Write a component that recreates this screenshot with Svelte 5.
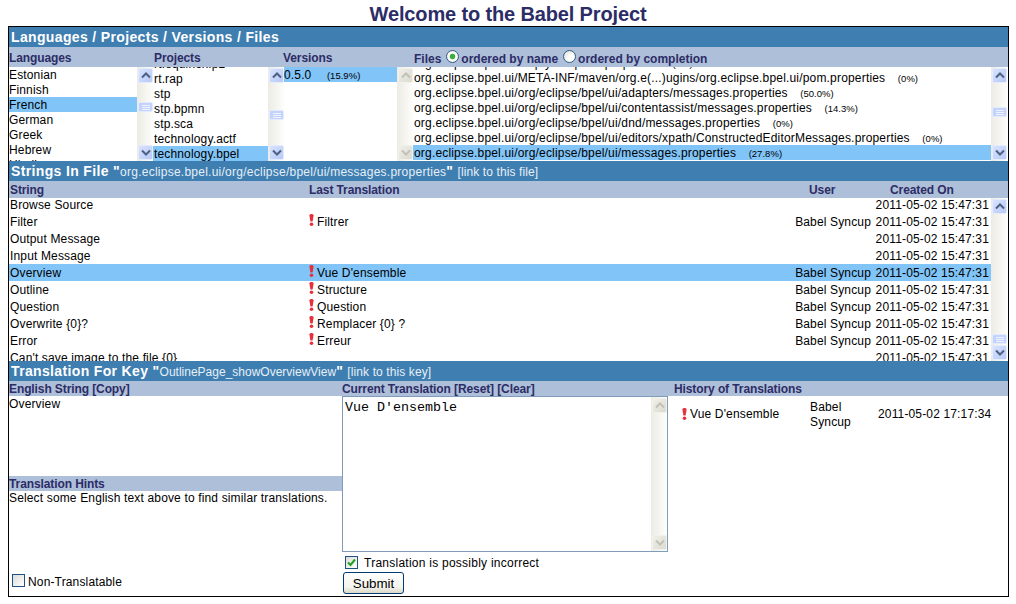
<script lang="ts">
  const languages = ['Estonian', 'Finnish', 'French', 'German', 'Greek', 'Hebrew', 'Hindi'];
  const projects = ['rt.equinox.p2', 'rt.rap', 'stp', 'stp.bpmn', 'stp.sca', 'technology.actf', 'technology.bpel'];

  const base = 'org.eclipse.bpel.ui/org/eclipse/bpel/ui/';
  const files = [
    { name: 'org.eclipse.bpel.ui/empty.template.properties', pct: '0 %' },
    { name: 'org.eclipse.bpel.ui/META-INF/maven/org.e(...)ugins/org.eclipse.bpel.ui/pom.properties', pct: '0 %' },
    { name: base + 'adapters/messages.properties', pct: '50.0 %' },
    { name: base + 'contentassist/messages.properties', pct: '14.3 %' },
    { name: base + 'dnd/messages.properties', pct: '0 %' },
    { name: base + 'editors/xpath/ConstructedEditorMessages.properties', pct: '0 %' },
    { name: base + 'messages.properties', pct: '27.8 %', selected: true }
  ];

  const stamp = '2011-05-02 15:47:31';
  const strings = [
    { key: 'Browse Source', text: '', user: '' },
    { key: 'Filter', text: 'Filtrer', user: 'Babel Syncup' },
    { key: 'Output Message', text: '', user: '' },
    { key: 'Input Message', text: '', user: '' },
    { key: 'Overview', text: "Vue D'ensemble", user: 'Babel Syncup', selected: true },
    { key: 'Outline', text: 'Structure', user: 'Babel Syncup' },
    { key: 'Question', text: 'Question', user: 'Babel Syncup' },
    { key: 'Overwrite {0}?', text: 'Remplacer {0} ?', user: 'Babel Syncup' },
    { key: 'Error', text: 'Erreur', user: 'Babel Syncup' },
    { key: "Can't save image to the file {0}", text: '', user: '' }
  ];
</script>

{#snippet arrow(up, disabled)}
  <div class="sb-btn" class:off={disabled}>
    <svg width="10" height="7" viewBox="0 0 10 7" aria-hidden="true">
      <polyline points={up ? '1,5.5 5,1.5 9,5.5' : '1,1.5 5,5.5 9,1.5'} />
    </svg>
  </div>
{/snippet}

{#snippet scrollbar(thumb, disabled = false)}
  <div class="sb">
    {@render arrow(true, disabled)}
    <div class="sb-track">
      {#if !disabled}
        <div class="sb-thumb" style="margin-top: {thumb}px"><i></i><i></i><i></i></div>
      {/if}
    </div>
    {@render arrow(false, disabled)}
  </div>
{/snippet}

{#snippet bang()}
  <svg class="bang" width="5" height="12" viewBox="0 0 5 12" aria-hidden="true">
    <path d="M0.4 1.6C0.4 0.6 1.3 0 2.5 0S4.6 0.6 4.6 1.6L3.6 7.6H1.4Z" />
    <circle cx="2.5" cy="10.2" r="1.8" />
  </svg>
{/snippet}

<h1>Welcome to the Babel Project</h1>

<div class="panel">
  <div class="bar">Languages / Projects / Versions / Files</div>
  <div class="sub pickers-head">
    <span>Languages</span>
    <span>Projects</span>
    <span>Versions</span>
    <span class="files-head">
      Files
      <span class="radio on"></span>ordered by name
      <span class="radio"></span>ordered by completion
    </span>
  </div>

  <div class="pickers">
    <div class="picker">
      <ul class="list">
        {#each languages as name}
          <li class:selected={name === 'French'}>{name}</li>
        {/each}
      </ul>
      {@render scrollbar(19)}
    </div>
    <div class="picker">
      <ul class="list scrolled-p">
        {#each projects as name}
          <li class:selected={name === 'technology.bpel'}>{name}</li>
        {/each}
      </ul>
      {@render scrollbar(27)}
    </div>
    <div class="picker">
      <ul class="list">
        <li class="selected">0.5.0 <small class="ver-pct">(15.9 %)</small></li>
      </ul>
      {@render scrollbar(0, true)}
    </div>
    <div class="picker">
      <ul class="list scrolled-f">
        {#each files as file}
          <li class:selected={file.selected}>{file.name} <small>({file.pct})</small></li>
        {/each}
      </ul>
      {@render scrollbar(24)}
    </div>
  </div>

  <div class="bar">Strings In File "<span class="thin">{base}messages.properties</span>" <span class="thin link">[link to this file]</span></div>
  <div class="sub strings-head">
    <span>String</span>
    <span>Last Translation</span>
    <span class="head-user">User</span>
    <span class="head-date">Created On</span>
  </div>

  <div class="strings">
    <div class="rows">
      {#each strings as row}
        <div class="row" class:selected={row.selected}>
          <span>{row.key}</span>
          <span class="cell-text">{#if row.text}{@render bang()}{row.text}{/if}</span>
          <span class="cell-right">{row.user}</span>
          <span class="cell-right">{stamp}</span>
        </div>
      {/each}
    </div>
    {@render scrollbar(120)}
  </div>

  <div class="bar">Translation For Key "<span class="thin key-name">OutlinePage_showOverviewView</span>" <span class="thin link">[link to this key]</span></div>

  <div class="editor">
    <section class="col">
      <div class="sub short">English String [Copy]</div>
      <div class="english">Overview</div>
      <div class="sub short">Translation Hints</div>
      <div class="hints">Select some English text above to find similar translations.</div>
      <label class="non-trans"><span class="check"></span><span class="non-trans-text">Non-Translatable</span></label>
    </section>

    <section class="col">
      <div class="sub short">Current Translation [Reset] [Clear]</div>
      <div class="area">
        <textarea readonly value="Vue D'ensemble"></textarea>
        {@render scrollbar(0, true)}
      </div>
      <label class="possibly">
        <span class="check">
          <svg width="11" height="11" viewBox="0 0 11 11" aria-hidden="true"><polyline points="2,5.5 4.5,8 9,2.5" /></svg>
        </span>
        <span class="nudge">Translation is possibly incorrect</span>
      </label>
      <button type="button">Submit</button>
    </section>

    <section class="col">
      <div class="sub short">History of Translations</div>
      <div class="history">
        <span class="hist-text">{@render bang()}Vue D'ensemble</span>
        <span class="hist-user">Babel Syncup</span>
        <span class="hist-date">2011-05-02 17:17:34</span>
      </div>
    </section>
  </div>
</div>

<style>
  :global(body) {
    margin: 0;
    background: #fff;
    font-family: "Liberation Sans", Arial, sans-serif;
    font-size: 12px;
    color: #000;
  }

  h1 {
    margin: 0;
    height: 26px;
    line-height: 28px;
    text-align: center;
    font-size: 20px;
    font-weight: bold;
    letter-spacing: -0.14px;
    color: #2c2c66;
  }

  .panel {
    box-sizing: border-box;
    width: 1001px;
    height: 571px;
    margin-left: 8px;
    border: 1px solid #000;
    display: flex;
    flex-direction: column;
    letter-spacing: 0.15px;
  }

  .bar {
    flex: none;
    height: 20px;
    line-height: 20px;
    padding-left: 2px;
    background: #3f7eb0;
    color: #fff;
    font-size: 14px;
    font-weight: bold;
    letter-spacing: 0.35px;
    white-space: nowrap;
  }

  .thin {
    font-size: 12px;
    font-weight: normal;
    letter-spacing: 0.25px;
    color: #e6eff7;
  }

  .key-name {
    letter-spacing: 0;
  }

  .link {
    letter-spacing: 0.1px;
  }

  .sub {
    flex: none;
    background: #aebfd9;
    color: #2c2c66;
    font-weight: bold;
    letter-spacing: -0.1px;
    white-space: nowrap;
  }

  .short {
    height: 15px;
    line-height: 16px;
  }

  .pickers-head {
    height: 20px;
    line-height: 22px;
    display: grid;
    grid-template-columns: 145px 129px 131px 1fr;
  }

  .files-head {
    display: flex;
    align-items: center;
    line-height: 24px;
    letter-spacing: 0;
  }

  .radio {
    box-sizing: border-box;
    width: 13px;
    height: 13px;
    margin: -5px 2px 0 5px;
    border: 1px solid #2f5f87;
    border-radius: 50%;
    background: radial-gradient(circle at 65% 65%, #fff 30%, #d8d6cc 100%);
  }

  .radio.on {
    background: radial-gradient(circle, #3fae3f 0 2.5px, #fff 3.2px, #e4e2d8 100%);
  }

  .pickers {
    flex: none;
    height: 94px;
    padding-right: 1px;
    display: grid;
    grid-template-columns: 144px 131px 129px 1fr;
    overflow: hidden;
  }

  .picker {
    display: flex;
    min-width: 0;
    height: 94px;
    overflow: hidden;
  }

  .list {
    flex: 1;
    min-width: 0;
    margin: 0;
    padding: 0;
    list-style: none;
    overflow: hidden;
  }

  .list li {
    height: 15px;
    line-height: 17px;
    white-space: nowrap;
  }

  .scrolled-p li,
  .scrolled-f li {
    padding-left: 1px;
  }

  .scrolled-f li {
    letter-spacing: 0.18px;
  }

  .scrolled-p li:first-child {
    margin-top: -11px;
  }

  .scrolled-f li:first-child {
    margin-top: -12px;
  }

  .selected {
    background: #80c4f8;
  }

  small {
    margin-left: 9px;
    font-size: 9.5px;
    letter-spacing: 0;
    word-spacing: -2.5px;
  }

  .ver-pct {
    margin-left: 12px;
  }

  .sb {
    flex: none;
    width: 16px;
    height: 100%;
    display: flex;
    flex-direction: column;
    background: linear-gradient(90deg, #ecebe4, #fdfdfb);
  }

  .sb-btn {
    flex: none;
    box-sizing: border-box;
    height: 15px;
    margin: 1px 0 0 1px;
    border: 1px solid #e4ebfc;
    border-radius: 2px;
    background: linear-gradient(135deg, #d8e3fe, #b7c9f6);
    display: flex;
    align-items: center;
    justify-content: center;
  }

  .sb-btn:last-child {
    margin: 0 0 1px 1px;
  }

  .sb-btn polyline {
    fill: none;
    stroke: #4d6185;
    stroke-width: 2;
  }

  .sb-btn.off {
    border-color: #f2f1ea;
    background: linear-gradient(135deg, #f0efe8, #dcdbd2);
  }

  .sb-btn.off polyline {
    stroke: #c2c1b6;
  }

  .sb-track {
    flex: 1;
    min-height: 0;
    overflow: hidden;
  }

  .sb-thumb {
    box-sizing: border-box;
    height: 10px;
    margin-left: 1px;
    border: 1px solid #e4ebfc;
    border-radius: 2px;
    background: #c3d3fb;
    display: flex;
    flex-direction: column;
    align-items: center;
    justify-content: center;
    gap: 1px;
  }

  .sb-thumb i {
    width: 8px;
    height: 1px;
    background: #eef3fe;
  }

  .strings-head,
  .row {
    display: grid;
    grid-template-columns: 300px 486px 78px 118px;
  }

  .strings-head {
    height: 17px;
    line-height: 19px;
  }

  .strings-head > :first-child,
  .row > :first-child {
    padding-left: 1px;
  }

  .head-user {
    padding-left: 14px;
  }

  .head-date {
    padding-left: 17px;
  }

  .strings {
    flex: none;
    height: 163px;
    padding-right: 1px;
    display: flex;
    overflow: hidden;
  }

  .rows {
    flex: 1;
    min-width: 0;
    overflow: hidden;
  }

  .row {
    height: 17px;
    line-height: 19px;
    white-space: nowrap;
  }

  .row:first-child {
    margin-top: -2px;
  }

  .cell-text {
    display: flex;
    align-items: flex-start;
  }

  .cell-right {
    text-align: right;
    padding-right: 2px;
  }

  .bang {
    flex: none;
    margin: 1px 3px 0 0;
    fill: #e8303c;
  }

  .editor {
    flex: 1;
    min-height: 0;
    display: grid;
    grid-template-columns: 333px 332px 1fr;
  }

  .col {
    display: flex;
    flex-direction: column;
    min-width: 0;
  }

  .english {
    height: 80px;
    line-height: 17px;
  }

  .hints {
    line-height: 15px;
  }

  .non-trans {
    display: flex;
    align-items: flex-start;
    gap: 3px;
    margin: auto 0 6px 3px;
  }

  .non-trans-text {
    margin-top: 1px;
    line-height: 15px;
  }

  .nudge {
    padding-top: 2px;
  }

  .check {
    box-sizing: border-box;
    flex: none;
    width: 13px;
    height: 13px;
    border: 1px solid #1c5180;
    background: linear-gradient(135deg, #dcdcd7, #fff);
    display: flex;
    align-items: center;
    justify-content: center;
  }

  .check polyline {
    fill: none;
    stroke: #21a121;
    stroke-width: 2;
  }

  .area {
    flex: none;
    box-sizing: border-box;
    width: 326px;
    height: 156px;
    border: 1px solid #7f9db9;
    display: flex;
  }

  .area textarea {
    flex: 1;
    min-width: 0;
    margin: 0;
    padding: 3px 2px;
    border: 0;
    outline: 0;
    resize: none;
    overflow: hidden;
    font-family: "Liberation Mono", "Courier New", monospace;
    font-size: 13.33px;
    letter-spacing: 0;
    color: #000;
  }

  .possibly {
    display: flex;
    align-items: center;
    gap: 6px;
    height: 20px;
    margin-left: 3px;
    letter-spacing: 0.25px;
  }

  button {
    box-sizing: border-box;
    width: 61px;
    height: 22px;
    margin-left: 1px;
    padding: 0;
    border: 1px solid #003c74;
    border-radius: 3px;
    background: linear-gradient(180deg, #fff, #f4f3ee 70%, #dcd8c8);
    font-family: inherit;
    font-size: 13.33px;
    color: #000;
  }

  .history {
    display: grid;
    grid-template-columns: 128px 68px auto;
    align-items: center;
    height: 36px;
    padding-left: 8px;
  }

  .hist-text {
    display: flex;
    align-items: flex-start;
  }

  .hist-user {
    line-height: 15px;
    padding-top: 1px;
  }
</style>
